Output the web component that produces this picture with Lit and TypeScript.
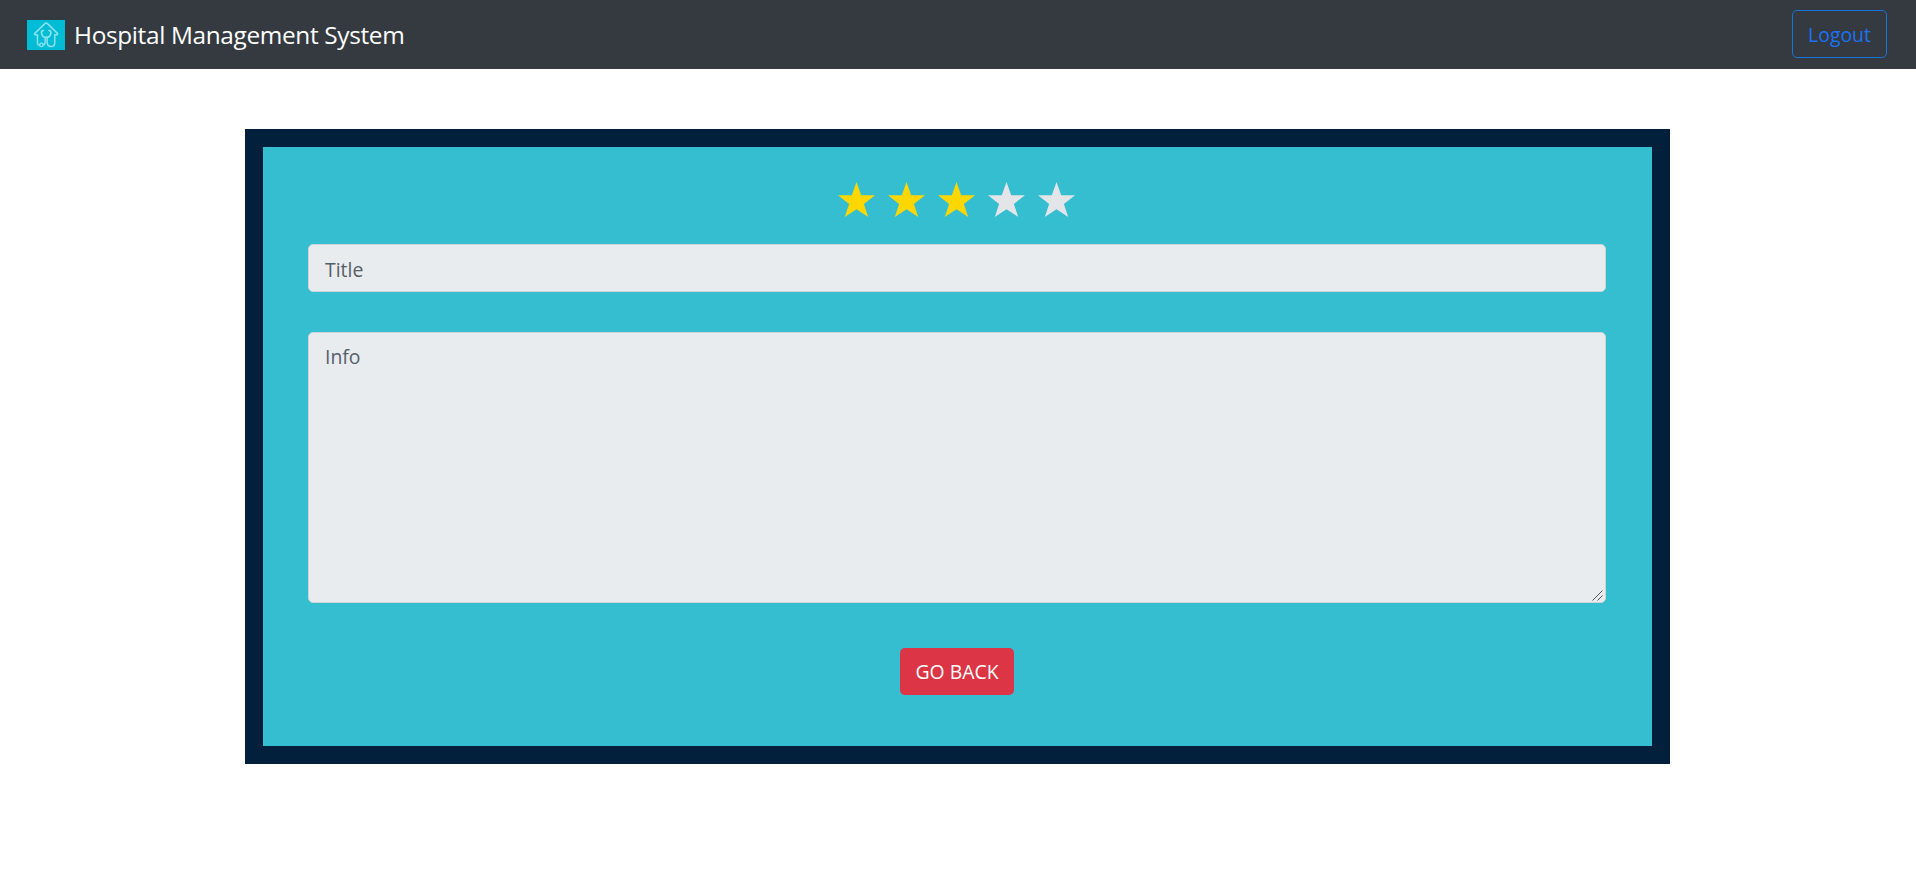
import { LitElement, html, css } from "lit";
import { customElement, property } from "lit/decorators.js";

@customElement("star-rating")
class StarRating extends LitElement {
  @property({ type: Number }) value = 0;

  static styles = css`
    :host { display: flex; justify-content: center; gap: 13px; padding-right: 1px; }
    svg { display: block; width: 37px; height: 35px; fill: #e4e5e9; }
    .on { fill: #ffd700; }
  `;

  render() {
    return [1, 2, 3, 4, 5].map(
      (n) => html`<svg class=${n <= this.value ? "on" : "off"} viewBox="0 0 37 35">
        <path d="M18.5 0L23.2 13.2H37L25.9 22L30.2 35L18.5 27.3L6.8 35L11.1 22L0 13.2H13.8Z" />
      </svg>`
    );
  }
}

@customElement("app-root")
class AppRoot extends LitElement {
  static styles = css`
    :host {
      display: block;
      min-height: 892px;
      background: #fff;
      font-family: "Open Sans", "Noto Sans", sans-serif;
      font-size: 19.4px;
      line-height: 30px;
    }
    * { box-sizing: border-box; }
    nav {
      display: flex;
      align-items: center;
      justify-content: space-between;
      height: 69px;
      padding: 0 29px 1px 27px;
      background: #343a40;
    }
    .brand {
      display: flex;
      align-items: center;
      gap: 9px;
      padding-top: 2px;
      color: #fff;
      font-size: 24.4px;
      letter-spacing: -0.35px;
      white-space: nowrap;
    }
    .logo { display: block; width: 38px; height: 30px; }
    button { font: inherit; border-radius: 5px; padding: 0; }
    .logout {
      width: 95px;
      height: 48px;
      padding-top: 2px;
      border: 1px solid #1874d8;
      background: transparent;
      color: #1a72f5;
    }
    .card {
      display: flex;
      flex-direction: column;
      width: 1425px;
      height: 635px;
      margin: 60px 0 0 245px;
      padding: 35px 46px 0 45px;
      border: 18px solid #02203c;
      background: #35bdd0;
    }
    input, textarea {
      display: block;
      width: 100%;
      margin: 0;
      border: 1px solid #ced4da;
      border-radius: 5px;
      background: #e9ecef;
      font: inherit;
      outline: none;
    }
    input { height: 48px; margin-top: 27px; padding: 2px 16px 0; }
    .info { position: relative; margin-top: 40px; }
    textarea { height: 271px; padding: 9px 16px; resize: none; }
    ::placeholder { color: #565e66; opacity: 1; }
    .grip { position: absolute; right: 3px; bottom: 2px; width: 11px; height: 11px; }
    .back {
      align-self: center;
      width: 114px;
      height: 47px;
      margin-top: 45px;
      border: 0;
      background: #dc3545;
      color: #fff;
    }
  `;

  render() {
    return html`
      <nav>
        <div class="brand">
          <svg class="logo" viewBox="0 0 38 30" fill="none" stroke="#8be2ee" stroke-linecap="round" stroke-linejoin="round">
            <rect width="38" height="30" fill="#00bcd4" stroke="none" />
            <path stroke-width="1.5" d="M10.5 23.5V14.8H8.2Q7 14.2 8 13.1L18.2 3.4Q19.2 2.6 20.2 3.4L30.2 13.1Q31.2 14.2 30 14.8H27.8V22.7C27.8 27.8 20.2 27.8 20.2 22.8V17.6M10.5 23.5Q10.6 25 12.2 25.2M16.4 24.8C18.5 24.5 18.2 22.6 18.2 21V17.6" />
            <path stroke-width="1.7" d="M16.3 10.6C14.7 10.5 14.3 11.6 14.5 12.8C15 15.8 17 17.4 19.2 17.4S23.5 15.8 23.9 12.8C24.1 11.5 23.5 10.5 22 10.6" />
            <circle cx="14.4" cy="24.9" r="1.7" stroke-width="1.3" />
          </svg>
          <span>Hospital Management System</span>
        </div>
        <button class="logout">Logout</button>
      </nav>
      <main class="card">
        <star-rating .value=${3}></star-rating>
        <input placeholder="Title" readonly />
        <div class="info">
          <textarea placeholder="Info" readonly></textarea>
          <svg class="grip" viewBox="0 0 11 11" stroke="#50555a" stroke-width="1">
            <path d="M0.5 10.5L10.5 0.5M5.5 10.5L10.5 5.5" />
          </svg>
        </div>
        <button class="back">GO BACK</button>
      </main>
    `;
  }
}
